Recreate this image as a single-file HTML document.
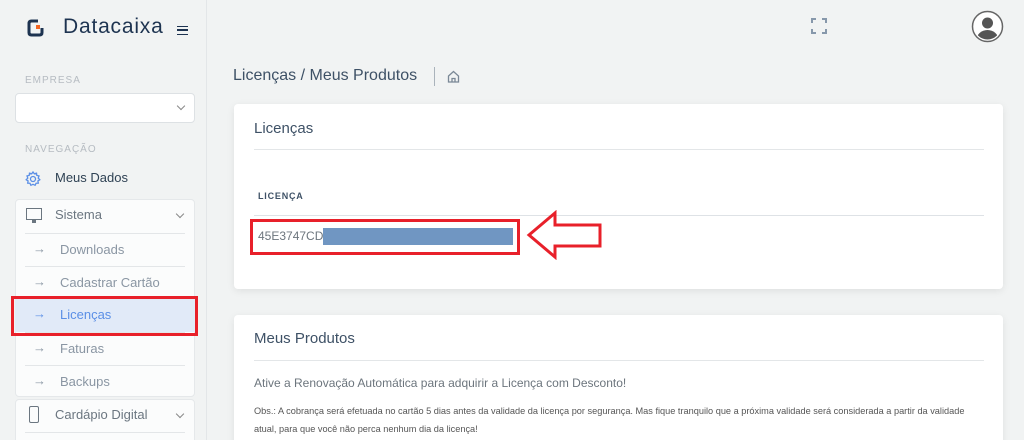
<!DOCTYPE html><html><head><meta charset="utf-8"><style>
*{box-sizing:border-box;margin:0;padding:0}
html,body{width:1024px;height:440px;overflow:hidden}
body{background:#f1f3f3;font-family:"Liberation Sans",sans-serif;position:relative}
.a{position:absolute}
.side{left:0;top:0;width:207px;height:440px;border-right:1px solid #e3e6e8;background:#f1f3f3}
.lbl{font-size:10px;letter-spacing:1px;color:#b6bcc2}
.box{background:#fbfcfc;border:1px solid #e5e8ea;border-radius:4px}
.it{left:25px;width:160px;height:33px;border-top:1px solid #e3e6e8;font-size:13px;color:#8a96a3}
.it span{position:absolute;left:35px;top:8px}
.it i{position:absolute;left:8px;top:7px;font-style:normal;font-size:13px}
.card{background:#fff;border-radius:4px;box-shadow:0 2px 8px rgba(0,0,0,.08)}
.chev{position:absolute;width:6px;height:6px;border-right:1.5px solid #888;border-bottom:1.5px solid #888;transform:rotate(45deg)}
</style></head><body>
<div class="a side">
<svg class="a" style="left:27px;top:19px" width="17" height="18" viewBox="0 0 17 18"><path d="M11 2H4.5Q2 2 2 4.5V13.5Q2 16 4.5 16H12.5Q15 16 15 13.5V9" fill="none" stroke="#1d3350" stroke-width="3"/><rect x="9" y="6" width="4" height="4" fill="#f26522"/></svg>
<div class="a" style="left:63px;top:15px;font-size:21px;color:#1d3350;letter-spacing:.8px">Datacaixa</div>
<div class="a" style="left:177px;top:26px;width:11px;height:9px;border-top:1.5px solid #1d3350;border-bottom:1.5px solid #1d3350"><div style="margin-top:2px;height:1.5px;background:#1d3350"></div></div>
<div class="a lbl" style="left:25px;top:75px">EMPRESA</div>
<div class="a" style="left:15px;top:93px;width:180px;height:30px;background:#fff;border:1px solid #dde1e4;border-radius:4px"><span class="chev" style="right:10px;top:9px"></span></div>
<div class="a lbl" style="left:25px;top:144px">NAVEGAÇÃO</div>
<svg class="a" style="left:25px;top:171px" width="16" height="16" viewBox="0 0 16 16" fill="none" stroke="#5b8fe6" stroke-width="1.3"><path d="M8 1L9.3 2.8L11.5 2.2L11.8 4.4L14 5L13.2 7.1L14.8 8.7L12.9 9.9L13.3 12.1L11.1 12.2L10.1 14.3L8 13.3L5.9 14.3L4.9 12.2L2.7 12.1L3.1 9.9L1.2 8.7L2.8 7.1L2 5L4.2 4.4L4.5 2.2L6.7 2.8Z"/><circle cx="8" cy="8" r="2.5"/></svg>
<div class="a" style="left:55px;top:170px;font-size:13px;color:#2f4254">Meus Dados</div>
<div class="a box" style="left:15px;top:199px;width:180px;height:198px"></div>
<div class="a" style="left:26px;top:208px;width:16px;height:12px;border:1.5px solid #6b7680"></div>
<div class="a" style="left:32px;top:220px;width:4px;height:3px;background:#6b7680"></div>
<div class="a" style="left:55px;top:207px;font-size:13px;color:#6b7680">Sistema</div>
<span class="chev" style="left:177px;top:211px"></span>
<div class="a it" style="top:233px"><i>→</i><span>Downloads</span></div>
<div class="a it" style="top:266px"><i>→</i><span>Cadastrar Cartão</span></div>
<div class="a" style="left:15px;top:299px;width:180px;height:33px;background:#e1eaf8"></div>
<div class="a it" style="top:299px;border-top:none;color:#5b8fe6"><i>→</i><span>Licenças</span></div>
<div class="a it" style="top:332px"><i>→</i><span>Faturas</span></div>
<div class="a it" style="top:365px"><i>→</i><span>Backups</span></div>
<div class="a" style="left:11px;top:296px;width:187px;height:40px;border:3px solid #e8202a"></div>
<div class="a box" style="left:15px;top:399px;width:180px;height:50px"></div>
<div class="a" style="left:29px;top:406px;width:10px;height:17px;border:1.5px solid #6b7680;border-radius:2px"></div>
<div class="a" style="left:55px;top:407px;font-size:13px;color:#6b7680">Cardápio Digital</div>
<span class="chev" style="left:177px;top:411px"></span>
<div class="a" style="left:25px;top:432px;width:160px;border-top:1px solid #e3e6e8"></div>
</div>
<svg class="a" style="left:811px;top:18px" width="16" height="16" viewBox="0 0 16 16" fill="none" stroke="#8798ab" stroke-width="2"><path d="M1 5V1H5M11 1H15V5M15 11V15H11M5 15H1V11"/></svg>
<svg class="a" style="left:971px;top:10px" width="33" height="33" viewBox="0 0 33 33"><circle cx="16.5" cy="16.5" r="15" fill="#fff" stroke="#666" stroke-width="1.5"/><clipPath id="c"><circle cx="16.5" cy="16.5" r="13"/></clipPath><g clip-path="url(#c)" fill="#555"><circle cx="16.5" cy="13" r="5.5"/><ellipse cx="16.5" cy="30" rx="11" ry="10"/></g></svg>
<div class="a" style="left:233px;top:67px;font-size:16px;color:#3e5166">Licenças / Meus Produtos</div>
<div class="a" style="left:434px;top:67px;height:19px;border-left:1px solid #aab3bb"></div>
<svg class="a" style="left:447px;top:70px" width="13" height="13" viewBox="0 0 13 13" fill="none" stroke="#7a8896" stroke-width="1.3"><path d="M1.5 6L6.5 1.5L11.5 6V12H1.5Z M5 12V8.5H8V12"/></svg>
<div class="a card" style="left:234px;top:104px;width:769px;height:185px"></div>
<div class="a" style="left:254px;top:120px;font-size:15px;color:#3e5166">Licenças</div>
<div class="a" style="left:254px;top:149px;width:730px;border-top:1px solid #e3e6e8"></div>
<div class="a" style="left:258px;top:191px;font-size:9px;font-weight:bold;letter-spacing:.8px;color:#3e5166">LICENÇA</div>
<div class="a" style="left:254px;top:215px;width:730px;border-top:1px solid #dee2e6"></div>
<div class="a" style="left:258px;top:229px;font-size:12px;color:#6c757d">45E3747CD</div>
<div class="a" style="left:323px;top:228px;width:190px;height:17px;background:#7096c2"></div>
<div class="a" style="left:250px;top:219px;width:270px;height:36px;border:3px solid #e8202a"></div>
<svg class="a" style="left:526px;top:210px" width="78" height="50" viewBox="0 0 78 50"><path d="M3 25L29 3V15H74V36H29V47Z" fill="#fff" stroke="#e8202a" stroke-width="3" stroke-linejoin="miter"/></svg>
<div class="a card" style="left:234px;top:315px;width:769px;height:140px"></div>
<div class="a" style="left:254px;top:330px;font-size:15px;color:#3e5166">Meus Produtos</div>
<div class="a" style="left:254px;top:360px;width:730px;border-top:1px solid #e3e6e8"></div>
<div class="a" style="left:254px;top:376px;font-size:12px;color:#6c757d">Ative a Renovação Automática para adquirir a Licença com Desconto!</div>
<div class="a" style="left:254px;top:402px;font-size:9.2px;color:#555;width:728px;line-height:18px">Obs.: A cobrança será efetuada no cartão 5 dias antes da validade da licença por segurança. Mas fique tranquilo que a próxima validade será considerada a partir da validade atual, para que você não perca nenhum dia da licença!</div>
</body></html>
